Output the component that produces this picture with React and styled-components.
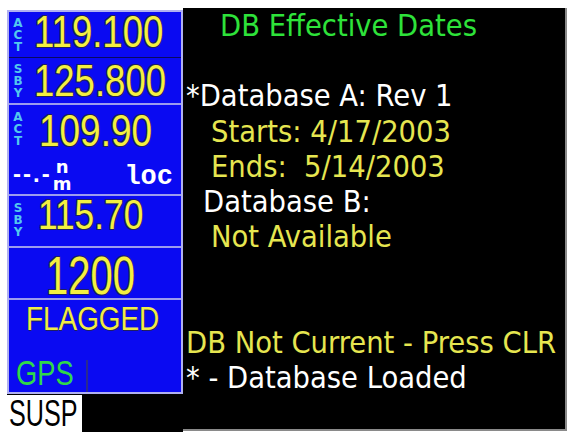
import React from 'react';
import styled, { createGlobalStyle } from 'styled-components';

const GlobalStyle = createGlobalStyle`
  html, body {
    margin: 0;
    padding: 0;
    background: #ffffff;
    width: 570px;
    height: 432px;
    overflow: hidden;
  }
`;

const Screen = styled.div`
  display: flex;
  padding: 8px 0 0 7px;
  height: 432px;
  box-sizing: border-box;
`;

const LeftCol = styled.div`
  width: 176px;
  display: flex;
  flex-direction: column;
  padding-top: 2px;
`;

const RadioPanel = styled.div`
  height: 384px;
  box-sizing: border-box;
  background: #0a0af2;
  border: 2px solid #b0b0f0;
  display: flex;
  flex-direction: column;
`;

const Box = styled.div`
  height: ${p => p.h}px;
  border-bottom: 2px solid #9c9cee;
  display: flex;
  flex-direction: column;
`;

const FreqRow = styled.div`
  height: ${p => p.h}px;
  display: flex;
  align-items: center;
  padding-left: 3px;
  border-bottom: ${p => (p.divider ? '1px solid #0a0a60' : 'none')};
`;

const Tag = styled.div`
  width: 12px;
  display: flex;
  flex-direction: column;
  align-items: center;
  font-family: 'DejaVu Sans', sans-serif;
  font-size: 12px;
  font-weight: 600;
  line-height: 12px;
  color: #52c8ee;
`;

// narrow display digits: Liberation Sans squeezed horizontally
const Freq = styled.div`
  display: inline-block;
  width: ${p => p.w}px;
  margin: ${p => p.m || '0'};
  white-space: nowrap;
  transform: scaleX(${p => p.sx});
  transform-origin: left center;
  font-family: 'Liberation Sans', sans-serif;
  font-size: ${p => p.size || 44}px;
  line-height: 1;
  color: #f4f040;
  text-shadow: 1px 1px 0 #202060, -1px -1px 0 #202060, 1px -1px 0 #202060, -1px 1px 0 #202060;
`;

const InfoRow = styled.div`
  flex: 1;
  display: flex;
  align-items: center;
  padding-left: 4px;
  color: #ffffff;
`;

const Dashes = styled.span`
  font-family: 'Liberation Sans', sans-serif;
  font-weight: bold;
  font-size: 24px;
  letter-spacing: 2px;
`;

const Unit = styled.div`
  display: flex;
  flex-direction: column;
  align-items: center;
  margin: 2px 0 0 1px;
  font-family: 'DejaVu Sans', sans-serif;
  font-weight: bold;
  font-size: 18px;
  line-height: 17px;
`;

const Loc = styled.span`
  margin: 6px 8px 0 auto;
  font-family: 'Liberation Mono', monospace;
  font-size: 27px;
  font-weight: bold;
`;

const CenterRow = styled.div`
  flex: 1;
  display: flex;
  align-items: center;
  justify-content: center;
  padding-right: 9px;
`;

const StatusBox = styled.div`
  flex: 1;
  display: flex;
  flex-direction: column;
`;

const Squeeze = styled.span`
  display: inline-block;
  width: ${p => p.w}px;
  white-space: nowrap;
  transform: scaleX(${p => p.sx});
  transform-origin: left center;
`;

const Flagged = styled.div`
  display: flex;
  justify-content: center;
  padding-right: 6px;
  font-family: 'Liberation Sans', sans-serif;
  font-size: 34px;
  line-height: 36px;
  color: #f0ec48;
  text-shadow: 1px 1px 0 #202060;
`;

const SourceRow = styled.div`
  margin-top: auto;
  display: flex;
  align-items: flex-end;
  padding-left: 7px;
  height: 34px;
`;

const Gps = styled.div`
  font-family: 'Liberation Sans', sans-serif;
  font-size: 35px;
  line-height: 1;
  color: #30d848;
  padding-bottom: 2px;
`;

const SourceRule = styled.span`
  width: 2px;
  height: 32px;
  margin-left: 12px;
  background: #2a2a90;
`;

const StatusBar = styled.div`
  flex: 1;
  background: #000000;
  display: flex;
`;

const Susp = styled.div`
  width: 75px;
  margin-top: 1px;
  background: #ffffff;
  color: #000000;
  font-family: 'Liberation Sans', sans-serif;
  font-size: 37px;
  line-height: 37px;
  padding-left: 2px;
  box-sizing: border-box;
`;

const RightCol = styled.div`
  width: 384px;
  height: 423px;
  box-sizing: border-box;
  background: #000000;
  border-right: 2px solid #8a8a8a;
  border-bottom: 2px solid #8a8a8a;
  padding-left: 3px;
  font-family: 'DejaVu Sans Condensed', 'DejaVu Sans', sans-serif;
  font-size: 30.5px;
`;

const Line = styled.div`
  height: 35.2px;
  line-height: 35.2px;
  white-space: pre;
  padding-left: ${p => p.indent || 0}px;
  color: ${p => p.color};
`;

const GREEN = '#2ee23a';
const YELLOW = '#e6e650';
const WHITE = '#ffffff';

const Vertical = ({ text }) => (
  <Tag>
    {text.split('').map((c, i) => (
      <span key={i}>{c}</span>
    ))}
  </Tag>
);

export default function App() {
  return (
    <>
      <GlobalStyle />
      <Screen>
        <LeftCol>
          <RadioPanel>
            <Box h={91}>
              <FreqRow h={45} divider>
                <Vertical text="ACT" />
                <Freq w={132} sx={0.83} m="0 0 6px 10px">119.100</Freq>
              </FreqRow>
              <FreqRow h={45}>
                <Vertical text="SBY" />
                <Freq w={132} sx={0.83} m="0 0 0 10px">125.800</Freq>
              </FreqRow>
            </Box>
            <Box h={89}>
              <FreqRow h={48}>
                <Vertical text="ACT" />
                <Freq w={113} sx={0.84} m="4px 0 0 15px">109.90</Freq>
              </FreqRow>
              <InfoRow>
                <Dashes>--.-</Dashes>
                <Unit>
                  <span>n</span>
                  <span>m</span>
                </Unit>
                <Loc>loc</Loc>
              </InfoRow>
            </Box>
            <Box h={50}>
              <FreqRow h={48}>
                <Vertical text="SBY" />
                <Freq w={108} sx={0.84} size={42} m="0 0 10px 14px">115.70</Freq>
              </FreqRow>
            </Box>
            <Box h={50}>
              <CenterRow>
                <Freq w={89} sx={0.74} size={54} m="0 0 8px 0">1200</Freq>
              </CenterRow>
            </Box>
            <StatusBox>
              <Flagged>
                <Squeeze w={132} sx={0.82}>FLAGGED</Squeeze>
              </Flagged>
              <SourceRow>
                <Gps>
                  <Squeeze w={58} sx={0.78}>GPS</Squeeze>
                </Gps>
                <SourceRule />
              </SourceRow>
            </StatusBox>
          </RadioPanel>
          <StatusBar>
            <Susp>
              <Squeeze w={70} sx={0.68}>SUSP</Squeeze>
            </Susp>
          </StatusBar>
        </LeftCol>
        <RightCol>
          <Line color={GREEN} indent={34}>DB Effective Dates</Line>
          <Line />
          <Line color={WHITE}>*Database A: Rev 1</Line>
          <Line color={YELLOW} indent={25}>Starts: 4/17/2003</Line>
          <Line color={YELLOW} indent={25}>Ends:  5/14/2003</Line>
          <Line color={WHITE} indent={17}>Database B:</Line>
          <Line color={YELLOW} indent={25}>Not Available</Line>
          <Line />
          <Line />
          <Line color={YELLOW}>DB Not Current - Press CLR</Line>
          <Line color={WHITE}>* - Database Loaded</Line>
        </RightCol>
      </Screen>
    </>
  );
}
